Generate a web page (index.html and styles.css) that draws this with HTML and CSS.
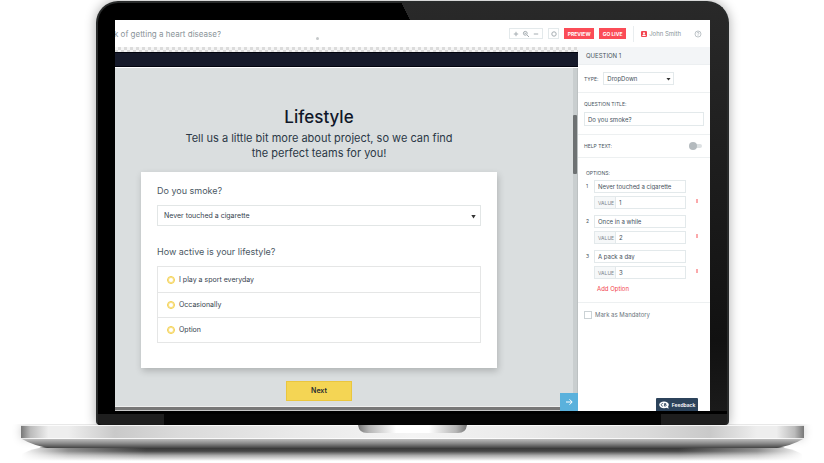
FILE: index.html
```
<!DOCTYPE html>
<html lang="en">
<head>
<meta charset="utf-8">
<title>Form builder</title>
<link rel="stylesheet" href="styles.css">
</head>
<body>
<div class="laptop">
  <div class="lid">
    <div class="app">
      <header class="topbar">
        <h1 class="doc-title"><span>k of getting a heart disease?</span></h1>
        <i class="dot"></i>
        <div class="zoom-group">
          <button class="tool" aria-label="Zoom in"><svg viewBox="0 0 8 8"><path d="M4 1.800v4.400M1.800 4h4.400"/></svg></button>
          <button class="tool" aria-label="Reset zoom"><svg viewBox="0 0 8 8"><circle cx="3.300" cy="3.300" r="1.900"/><path d="M4.800 4.800 7 7M2.500 3.300h1.600"/></svg></button>
          <button class="tool" aria-label="Zoom out"><svg viewBox="0 0 8 8"><path d="M1.800 4h4.400"/></svg></button>
        </div>
        <button class="tool boxed" aria-label="Settings"><svg viewBox="0 0 8 8"><circle cx="4" cy="4" r="2.200"/></svg></button>
        <button class="action">PREVIEW</button>
        <button class="action">GO LIVE</button>
        <div class="account">
          <svg class="avatar" viewBox="0 0 6 6"><rect width="6" height="6" rx="1"/><circle cx="3" cy="2.200" r="1"/><path d="M1.200 4.900c0-2 3.600-2 3.600 0z"/></svg>
          <a href="#account">John Smith</a>
        </div>
        <button class="tool help" aria-label="Help"><svg viewBox="0 0 8 8"><circle cx="4" cy="4" r="3"/><path d="M3 3.300c0-1.400 2-1.300 2-.1 0 .8-1 .7-1 1.500M4 5.400v.6"/></svg></button>
      </header>
      <div class="workspace">
        <main class="preview">
          <div class="checker"></div>
          <div class="site-bar"></div>
          <div class="canvas">
            <form class="page">
              <h2>Lifestyle</h2>
              <p class="lead">Tell us a little bit more about project, so we can find<br>the perfect teams for you!</p>
              <div class="card">
                <label class="question" for="smoke">Do you smoke?</label>
                <div class="select big">
                  <select id="smoke"><option>Never touched a cigarette</option><option>Once in a while</option><option>A pack a day</option></select>
                </div>
                <fieldset>
                  <legend class="question">How active is your lifestyle?</legend>
                  <div class="choices">
                    <label><input type="radio" name="active">I play a sport everyday</label>
                    <label><input type="radio" name="active">Occasionally</label>
                    <label><input type="radio" name="active">Option</label>
                  </div>
                </fieldset>
              </div>
              <button class="next" type="button">Next</button>
            </form>
            <div class="scroll-y"><i></i></div>
          </div>
          <div class="scroll-x"></div>
          <button class="collapse" aria-label="Next page"><svg viewBox="0 0 18 18"><path d="M6 9h6M9.500 6.300 12.200 9l-2.700 2.700"/></svg></button>
        </main>
        <aside class="panel">
          <h2>QUESTION 1</h2>
          <div class="row type-row">
            <label for="type">TYPE:</label>
            <div class="select small"><select id="type"><option>DropDown</option></select></div>
          </div>
          <div class="row title-row">
            <label for="qtitle">QUESTION TITLE:</label>
            <input id="qtitle" type="text" value="Do you smoke?">
          </div>
          <div class="row help-row">
            <label for="help">HELP TEXT:</label>
            <input id="help" class="toggle" type="checkbox" role="switch">
          </div>
          <div class="row options-row">
            <h3>OPTIONS:</h3>
            <ol>
              <li>
                <span class="num">1</span>
                <input type="text" aria-label="Option 1" value="Never touched a cigarette">
                <div class="value"><label for="v1">VALUE</label><input id="v1" type="text" value="1"></div>
                <button class="remove" aria-label="Remove option 1"></button>
              </li>
              <li>
                <span class="num">2</span>
                <input type="text" aria-label="Option 2" value="Once in a while">
                <div class="value"><label for="v2">VALUE</label><input id="v2" type="text" value="2"></div>
                <button class="remove" aria-label="Remove option 2"></button>
              </li>
              <li>
                <span class="num">3</span>
                <input type="text" aria-label="Option 3" value="A pack a day">
                <div class="value"><label for="v3">VALUE</label><input id="v3" type="text" value="3"></div>
                <button class="remove" aria-label="Remove option 3"></button>
              </li>
            </ol>
            <a class="add" href="#add">Add Option</a>
          </div>
          <div class="mandatory"><input id="mandatory" type="checkbox"><label for="mandatory">Mark as Mandatory</label></div>
          <button class="feedback"><svg viewBox="0 0 10 8"><ellipse cx="5" cy="3.800" rx="4.800" ry="3.400"/><path d="M6.500 6 9.600 7.800 9 5z"/><path class="mark" d="M4.200 2.700a1.300 1.300 0 1 0 0 2.200M5.500 2.500h1.200q.9.600 0 1.200H5.900h.8q1.100.7 0 1.400H5.500z"/></svg>Feedback</button>
        </aside>
      </div>
    </div>
    <div class="hinge"></div>
  </div>
  <svg class="base" viewBox="0 0 824 39" preserveAspectRatio="none" aria-hidden="true">
    <defs>
      <linearGradient id="metal">
        <stop offset="0" stop-color="#777"/><stop offset=".012" stop-color="#bbb"/><stop offset=".035" stop-color="#eee"/><stop offset=".06" stop-color="#eee"/><stop offset=".12" stop-color="#c9c9c9"/><stop offset=".2" stop-color="#dadada"/><stop offset=".35" stop-color="#e9e9e9"/><stop offset=".5" stop-color="#f4f4f4"/><stop offset=".65" stop-color="#e9e9e9"/><stop offset=".8" stop-color="#dadada"/><stop offset=".88" stop-color="#c9c9c9"/><stop offset=".94" stop-color="#eee"/><stop offset=".965" stop-color="#eee"/><stop offset=".988" stop-color="#bbb"/><stop offset="1" stop-color="#777"/>
      </linearGradient>
      <linearGradient id="under" x2="0" y2="1"><stop offset="0" stop-color="#d0d0d0"/><stop offset=".5" stop-color="#8c8c8c"/><stop offset="1" stop-color="#444"/></linearGradient>
      <linearGradient id="cast" x2="0" y2="1"><stop offset="0" stop-color="#333"/><stop offset=".3" stop-color="#484848"/><stop offset=".6" stop-color="#aaa"/><stop offset="1" stop-color="#fff"/></linearGradient>
      <linearGradient id="fade"><stop offset="0" stop-color="#fff"/><stop offset=".06" stop-color="#fff" stop-opacity=".4"/><stop offset=".16" stop-color="#fff" stop-opacity="0"/><stop offset=".84" stop-color="#fff" stop-opacity="0"/><stop offset=".94" stop-color="#fff" stop-opacity=".4"/><stop offset="1" stop-color="#fff"/></linearGradient>
      <linearGradient id="notch"><stop offset="0" stop-color="#777"/><stop offset=".1" stop-color="#b5b5b5"/><stop offset=".35" stop-color="#fff"/><stop offset=".65" stop-color="#fff"/><stop offset=".9" stop-color="#b5b5b5"/><stop offset="1" stop-color="#777"/></linearGradient>
    </defs>
    <path fill="url(#cast)" d="M48 23h728q16 1 26 7v7H22v-7q10-6 26-7z"/>
    <path fill="url(#fade)" d="M21 24h783v14H21z"/>
    <path fill="url(#under)" d="M22 15h781q-12 7-28 9H50q-16-2-28-9z"/>
    <path class="deck" fill="url(#metal)" d="M21 1h783v13q0 1-1 1H22q-1 0-1-1z"/>
    <path fill="#fff" opacity=".8" d="M21 1h783v1H21zM21 14h783v1H21z"/>
    <path fill="url(#notch)" d="M358 1h109q-1 8-9 8h-91q-8 0-9-8z"/>
  </svg>
</div>
</body>
</html>
```

FILE: styles.css
```
* { box-sizing: border-box; }

body {
  margin: 0;
  background: #fff;
  color: #3c4650;
  font: 6px/8px Inter, "Open Sans", sans-serif;
  overflow: hidden;
}

h1, h2, h3, p, ol, fieldset { margin: 0; padding: 0; border: 0; font-weight: 400; }
button, input, select { font: inherit; color: inherit; margin: 0; padding: 0; border: 0; background: none; border-radius: 0; }
a { color: inherit; text-decoration: none; }
svg { display: block; fill: none; stroke: currentColor; }

.laptop { padding-top: 1px; }

.lid {
  margin: 0 95px 0 96px;
  padding: 17px 17px 0;
  border: 2px solid #292b2b;
  border-bottom: 0;
  border-radius: 22px 22px 4px 4px;
  background:
    linear-gradient(63deg, #000 49%, transparent 49%) 0 0 / 100% 18px no-repeat,
    linear-gradient(90deg, #000 50%, transparent 50%) 0 18px no-repeat,
    linear-gradient(#292929, #111 80%, #1c1c1c);
  box-shadow: 0 0 12px #0005;
}

.hinge {
  height: 14px;
  margin: 0 -17px;
  background: linear-gradient(#000 3px, transparent 3px), linear-gradient(90deg, #1e1e1e 66px, #050505 66px calc(100% - 66px), #1e1e1e calc(100% - 66px));
  border-radius: 0 0 4px 4px;
}

.app { background: #fff; }

/* Top bar */
.topbar { display: flex; align-items: center; height: 27px; padding-right: 8px; }
.doc-title { display: flex; justify-content: flex-end; width: 106px; overflow: hidden; font-size: 8px; line-height: 12px; color: #8a9499; white-space: nowrap; }
.dot { width: 3px; height: 3px; margin: 9px auto 0 95px; border-radius: 50%; background: #c5c8ca; }
.tool { width: 8px; height: 8px; color: #a4acb1; }
.tool svg { width: 8px; height: 8px; stroke-width: 1; }
.zoom-group { display: flex; align-items: center; gap: 2px; height: 11px; padding: 0 2px; border: 1px solid #e3e9eb; }
.boxed { display: grid; place-items: center; width: 11px; height: 11px; margin-left: 5px; border: 1px solid #e3e9eb; }
.action { width: 30px; height: 11px; margin-left: 5px; background: #fb4c57; color: #fff; font-size: 5px; font-weight: 700; }
.action + .action { width: 27px; }
.account { display: flex; align-items: center; gap: 2px; height: 16px; margin-left: 7px; padding-left: 7px; border-left: 1px solid #e9edef; color: #8a9499; }
.avatar { width: 6px; height: 6px; fill: #fff; stroke: none; }
.avatar rect { fill: #f34550; }
.help { margin-left: 13px; }
.help svg { stroke-width: .7; }

/* Preview */
.workspace { display: flex; }
.preview { position: relative; display: flex; flex-direction: column; flex: 1; }
.checker { height: 5px; background: repeating-conic-gradient(#dcdcdc 0 25%, #f6f6f6 0 50%) 0 0 / 6px 6px; }
.site-bar { height: 15px; background: #161a2a; border: solid #03050f; border-width: 1px 0; }
.canvas { display: flex; flex: 1; background: #dadedf; border-top: 1px solid #fff; }
.page { flex: 1; padding: 38px 76px 0 26px; text-align: center; }
.page h2 { font-size: 17px; line-height: 22px; font-weight: 500; color: #101729; }
.lead { margin-top: 3px; font-size: 11px; line-height: 15px; color: #2b3846; white-space: nowrap; }
.card { margin-top: 11px; padding: 12px 16px 25px; background: #fff; box-shadow: 1px 3px 7px #0003; text-align: left; }
.question { display: block; padding: 0; font-size: 9px; line-height: 14px; color: #4b5864; }
.select { position: relative; }
.select select { display: block; width: 100%; appearance: none; border: 1px solid #e2e6e6; background: #fff; }
.select::after { content: ""; position: absolute; top: 50%; right: 5px; width: 5px; height: 4px; margin-top: -1px; background: #333; clip-path: polygon(0 0, 100% 0, 50% 100%); }
.big { margin-top: 7px; }
.big select { height: 21px; padding-left: 6px; font-size: 7px; color: #36424e; }
fieldset { margin-top: 19px; }
.choices { margin-top: 7px; border: 1px solid #e5e6e6; font-size: 7px; color: #36424e; }
.choices label { display: flex; align-items: center; gap: 4px; height: 25px; padding-left: 9px; }
.choices label + label { border-top: 1px solid #e5e6e6; }
.choices input { appearance: none; width: 8px; height: 8px; border: 1px solid #f4cf48; box-shadow: inset 0 0 0 1px #f8e08a; border-radius: 50%; }
.next { width: 66px; height: 20px; margin: 13px 0 5px; border: 1px solid #eac63e; background: #f4d554; font-size: 7px; font-weight: 600; color: #2a2d30; }
.scroll-y { width: 5px; padding-top: 47px; background: #c9cecf; border-right: 1px solid #bcc1c2; }
.scroll-y i { display: block; width: 4px; height: 59px; background: #6e7273; border-radius: 1px; }
.scroll-x { height: 5px; border-top: 1px solid #eee; background: linear-gradient(#777 3px, #c8c8c8 3px); }
.collapse { position: absolute; right: 0; bottom: 0; width: 18px; height: 18px; background: #5ab1dc; color: #fff; }

/* Settings panel */
.panel { position: relative; width: 132px; background: #fff; color: #46525c; }
.panel h2 { height: 18px; padding: 5px 8px; background: #f3f5f7; border-bottom: 1px solid #eceff1; font-size: 6px; }
.row { border-bottom: 1px solid #edf0f1; padding: 0 6px; }
.row label, .row h3 { font-size: 5px; }
.panel input[type="text"] { display: block; width: 100%; height: 13px; padding: 0 3px; border: 1px solid #e3e9eb; }
.type-row { display: flex; align-items: center; height: 28px; gap: 5px; }
.small { width: 71px; margin-left: auto; margin-right: 30px; }
.small select { height: 13px; padding-left: 3px; border-color: #e3e9eb; }
.small::after { right: 3px; height: 3px; }
.title-row { padding-top: 7px; padding-bottom: 8px; }
.title-row label { display: block; margin-bottom: 4px; }
.panel .title-row input { height: 14px; }
.help-row { display: flex; align-items: center; justify-content: space-between; height: 23px; padding-right: 8px; }
.toggle { appearance: none; position: relative; width: 11px; height: 4px; border-radius: 2px; background: #dde1e3; }
.toggle::before { content: ""; position: absolute; left: -2px; top: -2px; width: 8px; height: 8px; border-radius: 50%; background: #b4babe; }
.options-row { padding: 11px 24px 9px 8px; }
ol { display: grid; gap: 6px; list-style: none; margin-top: 3px; }
li { display: grid; grid-template-columns: 8px 1fr; row-gap: 3px; position: relative; }
.num { font-size: 5px; line-height: 13px; }
.value { grid-column: 2; display: flex; }
.value label { flex: none; width: 21px; height: 13px; padding: 2px 3px; border: 1px solid #e3e9eb; border-right: 0; background: #f6f8f9; color: #7b858d; }
.remove { position: absolute; right: -12px; bottom: 6px; width: 2px; height: 4px; background: #fba9ab; }
.add { display: block; margin: 6px 0 0 11px; color: #f2444e; }
.mandatory { display: flex; align-items: center; gap: 3px; padding: 8px 6px; color: #6b757d; }
.mandatory input { appearance: none; width: 8px; height: 8px; border: 1px solid #cbd2d5; }
.feedback { position: absolute; right: 12px; bottom: 0; display: flex; align-items: center; justify-content: center; gap: 3px; width: 42px; height: 13px; border-radius: 1px 1px 0 0; background: #2c435b; color: #fff; font-size: 5px; font-weight: 600; }
.feedback svg { width: 10px; height: 8px; fill: #fff; stroke: none; }
.feedback .mark { fill: none; stroke: #2c435b; stroke-width: .8; }

.base { position: relative; width: 100%; height: 39px; margin-top: -1px; stroke: none; }
.deck { filter: drop-shadow(0 0 4px #0003); }
```
